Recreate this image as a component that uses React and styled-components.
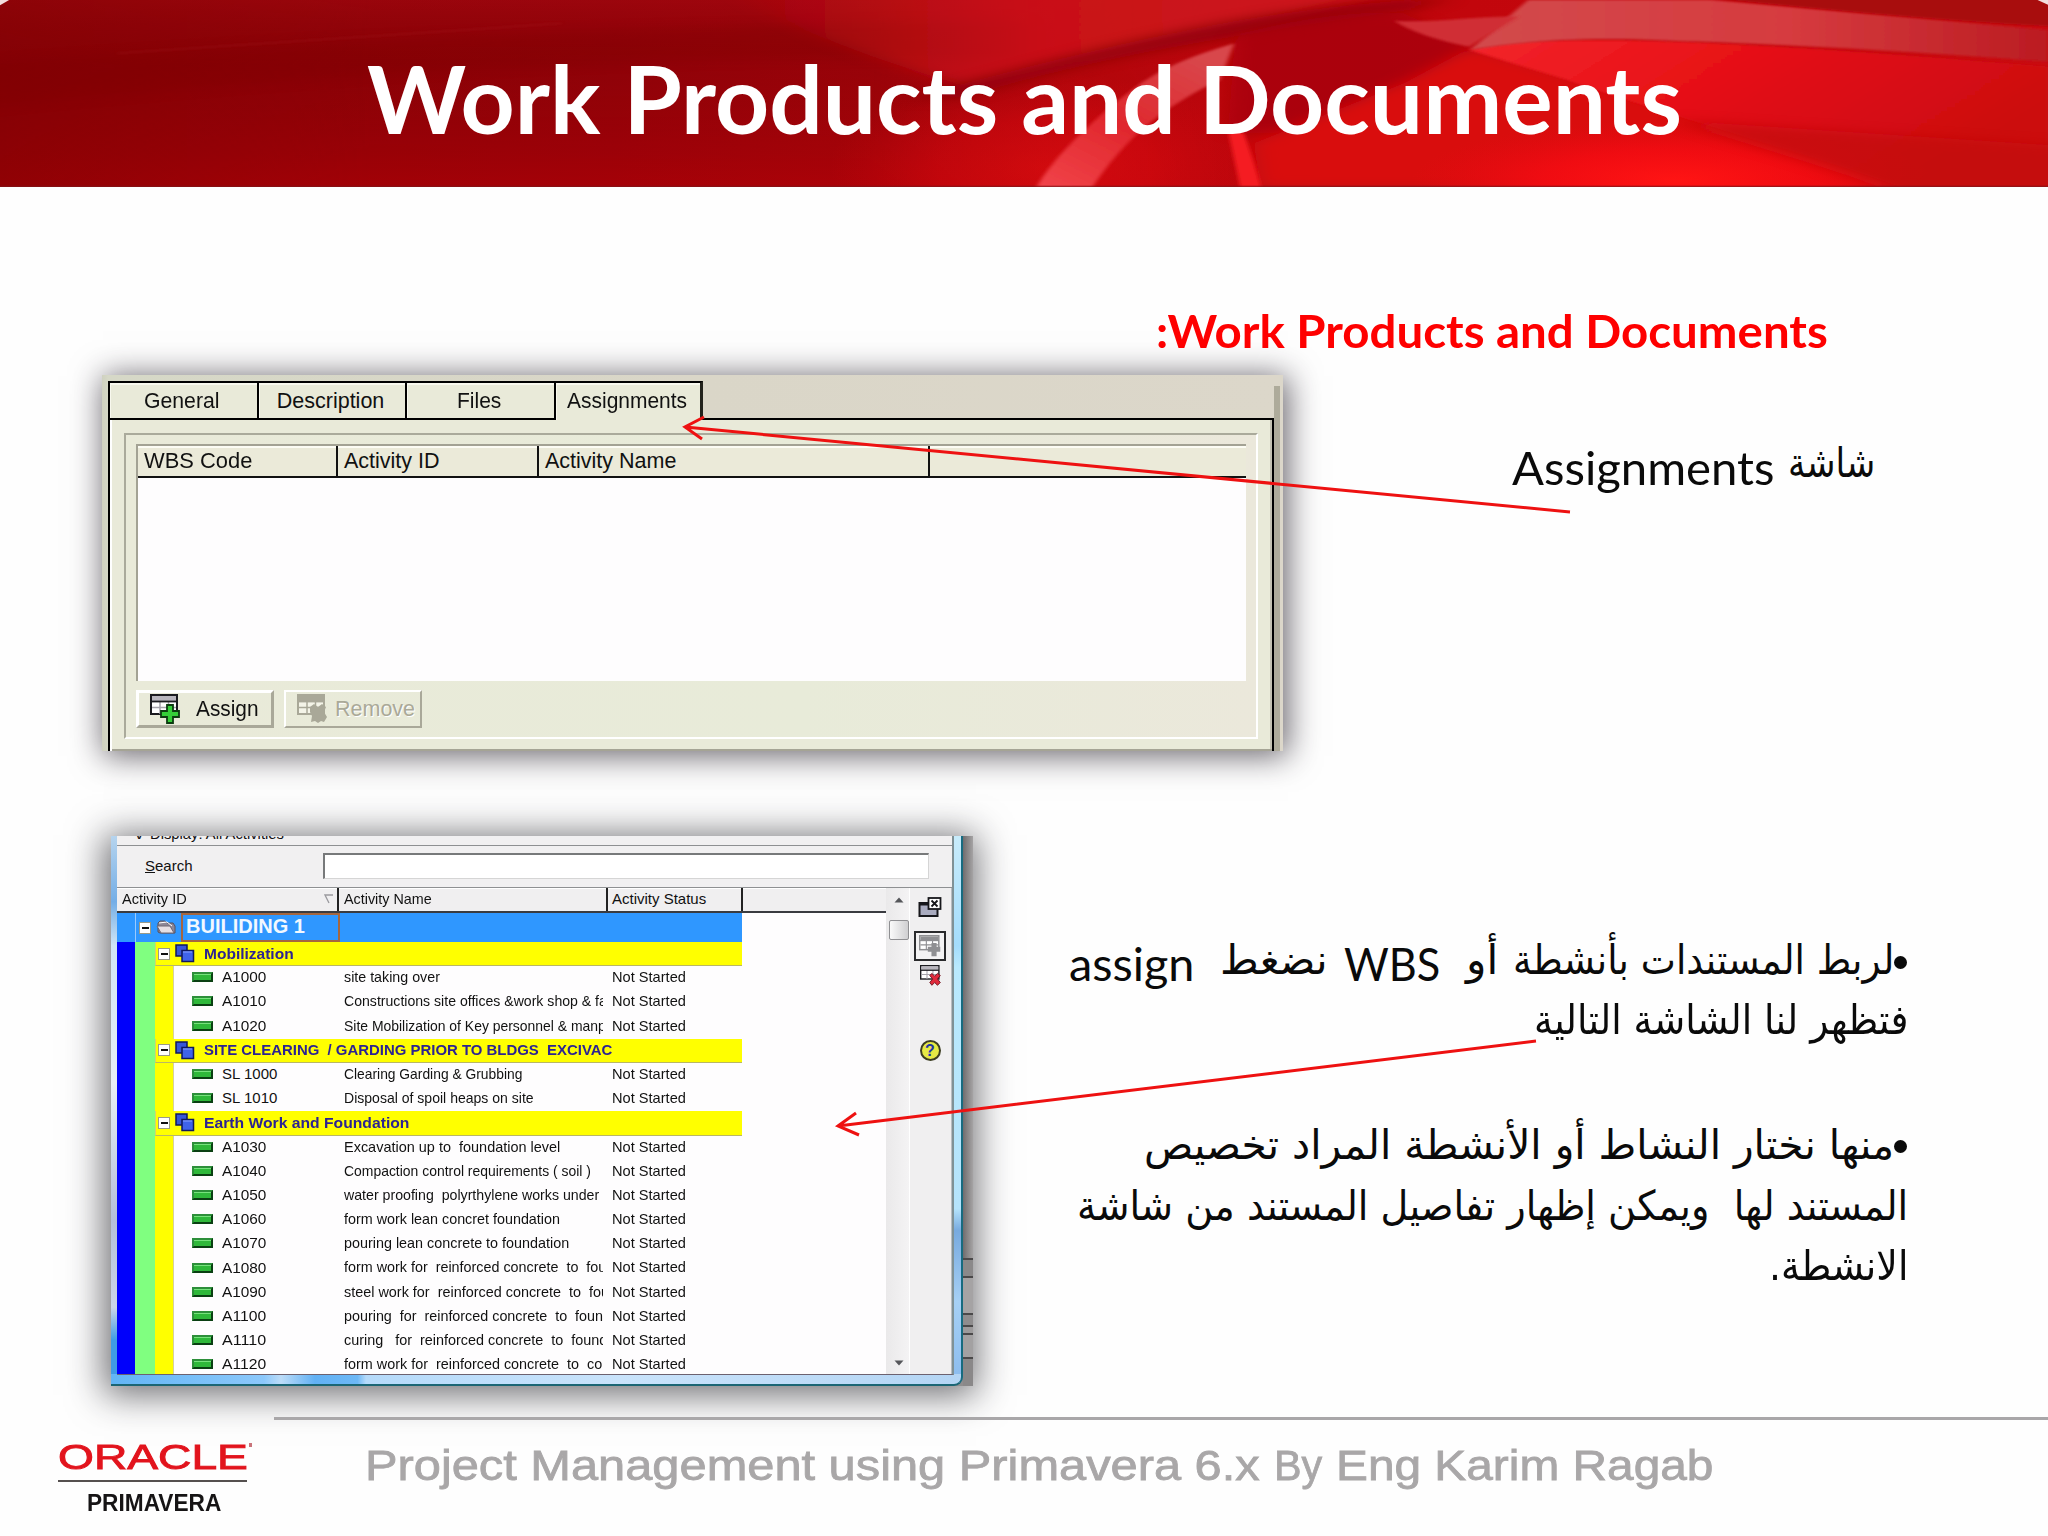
import React, { useLayoutEffect, useRef, useState } from "react";
import styled, { createGlobalStyle } from "styled-components";

const GlobalStyle = createGlobalStyle`
  *, *::before, *::after { box-sizing: border-box; }
  body { margin: 0; background: #fefefe; }
`;

const UI = `"Liberation Sans", Arial, sans-serif`;
const TITLE = `Lato, "Open Sans", sans-serif`;
const ARABIC = `"DejaVu Sans", "Noto Sans", sans-serif`;

/* ---------- text stretched to a set measure ---------- */

const FitBox = styled.span`
  display: block;
  flex: none;
  direction: ltr;
  text-align: left;
  white-space: pre;
  width: ${(p) => p.$w}px;
`;
const FitInner = styled.span`
  display: inline-block;
  transform-origin: 0 50%;
`;

function Fit({ w, drop = 0, rtl, className, children }) {
  const ref = useRef(null);
  const [scale, setScale] = useState(1);
  useLayoutEffect(() => {
    if (ref.current.offsetWidth) setScale(w / ref.current.offsetWidth);
  }, [w]);
  return (
    <FitBox $w={w} className={className}>
      <FitInner
        ref={ref}
        dir={rtl ? "rtl" : "ltr"}
        style={{ transform: `translateY(${drop}px) scaleX(${scale})` }}
      >
        {children}
      </FitInner>
    </FitBox>
  );
}

/* ---------- slide frame ---------- */

const Slide = styled.div`
  position: relative;
  display: flex;
  flex-direction: column;
  width: 2048px;
  height: 1536px;
  overflow: hidden;
  background: #fefefe;
`;
const Banner = styled.header`
  position: relative;
  flex: none;
  display: flex;
  justify-content: center;
  height: 187px;
  padding-top: 43px;
  background: #9a0308;
`;
const BannerArt = styled.svg`
  position: absolute;
  inset: 0;
  width: 100%;
  height: 100%;
`;
const Title = styled.h1`
  position: relative;
  margin: 0;
  font: 700 93px/110px ${TITLE};
  color: #fff;
`;
const HeadingRow = styled.div`
  flex: none;
  display: flex;
  justify-content: flex-end;
  height: 188px;
  padding: 116px 220px 0 0;
`;
const Heading = styled.h2`
  margin: 0;
  font: 700 46.5px/54px ${TITLE};
  color: #fe0000;
`;
const Section = styled.section`
  flex: none;
  display: flex;
  justify-content: space-between;
  height: ${(p) => p.$h}px;
  margin-bottom: ${(p) => p.$gap || 0}px;
  padding-left: ${(p) => p.$left}px;
`;
const Notes = styled.div`
  padding: ${(p) => p.$top}px ${(p) => p.$right}px 0 0;
`;
const Line = styled.div`
  display: flex;
  direction: rtl;
  height: 61.4px;
`;
const Latin = styled(Fit)`
  font: 400 46px/61.4px ${TITLE};
  color: #0a0a0a;
  margin-right: ${(p) => p.$gap || 0}px;
`;
const Arabic = styled(Fit)`
  font: 400 41px/61.4px ${ARABIC};
  color: #0a0a0a;
  margin-right: ${(p) => p.$gap || 0}px;
`;
const Bullet = styled.span`
  flex: none;
  width: 13px;
  height: 13px;
  margin: 27px 1px 0 0;
  border-radius: 50%;
  overflow: hidden;
  background: #0a0a0a;
  color: transparent;
`;
const Arrows = styled.svg`
  position: absolute;
  inset: 0;
  pointer-events: none;
`;

/* ---------- assignments panel ---------- */

const Panel = styled.div`
  display: flex;
  width: 1181px;
  height: 376px;
  padding: 6px 0 0 6px;
  background: linear-gradient(90deg, #cfd1c0 0, #d6d8c7 6px, #dad6c8 600px, #dcd7ca);
  box-shadow: 3px 3px 30px 2px rgba(30, 25, 35, 0.66);
`;
const PanelMain = styled.div`
  display: flex;
  flex-direction: column;
  width: 1166px;
  font: 400 21.5px/24px ${UI};
  color: #111;
`;
const PanelEdge = styled.div`
  width: 6px;
  margin-top: 5px;
  background: #aeab9b;
`;
const Tabs = styled.div`
  display: flex;
  height: 39px;
`;
const Tab = styled.div`
  display: flex;
  justify-content: center;
  width: ${(p) => (p.$active ? 149 : 148.5)}px;
  padding: 6px 2px 0 0;
  background: #e9ead9;
  border: 2px solid #000;
  border-right: ${(p) => (p.$active ? "3px solid #22221c" : "0")};
  border-bottom: ${(p) => (p.$active ? "0" : "2px solid #000")};
  box-shadow: inset 1px 2px 0 #f8f8ee;
`;
const TabRest = styled.div`
  flex: 1;
  border-bottom: 2px solid #000;
`;
const Page = styled.div`
  flex: 1;
  padding: 13px 14px 12px;
  background: #e9ead9;
  border: solid #000;
  border-width: 0 2px;
  box-shadow: inset 2px 0 0 #fff, inset 0 -2px 0 #a5a495, inset -2px 0 0 #c3c1b2;
`;
const Group = styled.div`
  height: 100%;
  padding: 9px 8px 0 10px;
  border: 2px solid;
  border-color: #aaaa9b #fff #fff #aaaa9b;
  background: linear-gradient(90deg, #e9ead9, #e8ebd9 60%, #ebe8db);
`;
const List = styled.div`
  width: 1110px;
  height: 237px;
  background: #fefdfe;
  border: solid #a3a294;
  border-width: 2px 0 0 2px;
`;
const ListHead = styled.div`
  display: flex;
  height: 32px;
  background: #ebead9;
  border-bottom: 2px solid #111;
  box-shadow: inset 0 2px 0 #fcfcf4;
`;
const ListCol = styled.div`
  width: ${(p) => p.$w}px;
  padding: 3px 0 0 6px;
  border-right: ${(p) => (p.$last ? "0" : "2px solid #111")};
`;
const Buttons = styled.div`
  display: flex;
  gap: 10px;
  margin-top: 9px;
`;
const Button = styled.div`
  display: flex;
  align-items: center;
  width: 138px;
  height: 38px;
  padding: 0 0 0 11px;
  gap: ${(p) => (p.$off ? 8 : 16)}px;
  color: ${(p) => (p.$off ? "#aaa998" : "#111")};
  text-shadow: ${(p) => (p.$off ? "1px 1px 0 #fff" : "none")};
  border: ${(p) => (p.$off ? 2 : 3)}px solid;
  border-color: #fff #a9a899 #a9a899 #fff;
`;

/* ---------- activity picker window ---------- */

const Window = styled.div`
  display: flex;
  width: 862px;
  height: 550px;
  background: #8f8d8e;
  box-shadow: -2px 4px 34px 5px rgba(25, 25, 30, 0.62);
`;
const Frame = styled.div`
  display: flex;
  width: 852px;
  height: 550px;
  padding: 0 7px 12px 6px;
  border-bottom: 2px solid #1b6675;
  border-right: 2px solid #176b80;
  border-radius: 0 0 9px 0;
  background:
    linear-gradient(90deg, #62b5f5, #8cc8fb 18%, #bcdcf8 20%, #62b1f4 24%, #6db8f6 29%, #b5dafa 30%, #c9e3fb 60%, #b4d5f4) 0 100% / 100% 10px no-repeat,
    linear-gradient(180deg, #c8ecfb, #a4dcfb 20%, #b9e9fd 24%, #b5e3fb 68%, #78aadf 72%, #a6d0f5 85%, #8abbee) 100% 0 / 8px 100% no-repeat,
    linear-gradient(180deg, #b6d4ee, #74aee6 12%, #cfe5f5 20%, #e8eef5 45%, #b4bfd8 70%, #cbd7e8 86%, #3f9be5 92%) 0 0 / 6px 100% no-repeat,
    #c6e2f6;
`;
const Beyond = styled.div`
  width: 10px;
  display: flex;
  flex-direction: column;
  padding-top: 422px;
  background: linear-gradient(90deg, #6f6d6e, #a5a3a4);
`;
const Notch = styled.div`
  flex: none;
  height: ${(p) => p.$h}px;
  border-top: 2px solid #4b494a;
  background: ${(p) => p.$c};
`;
const Client = styled.div`
  flex: none;
  display: flex;
  flex-direction: column;
  width: 837px;
  height: 539px;
  overflow: hidden;
  background: #f1f0f1;
  border-right: 2px solid #7f9196;
  border-bottom: 1px solid #6c6270;
  font: 400 15px/18px ${UI};
  color: #111;
`;
const DisplayBar = styled.div`
  flex: none;
  display: flex;
  gap: 6px;
  height: 10px;
  overflow: hidden;
  padding-left: 18px;
  border-bottom: 1px solid #8e9092;
`;
const SearchBar = styled.div`
  flex: none;
  display: flex;
  height: 42px;
  padding: 7px 23px 0 28px;
  border-bottom: 1px solid #8e9092;
`;
const SearchLabel = styled.div`
  width: 178px;
  padding-top: 4px;
`;
const SearchInput = styled.div`
  flex: 1;
  height: 26px;
  background: #fff;
  border: solid #77797a;
  border-width: 2px 1px 1px 2px;
  border-right-color: #d5d5d5;
  border-bottom-color: #d5d5d5;
`;
const Body = styled.div`
  flex: 1;
  display: flex;
  min-height: 0;
`;
const Table = styled.div`
  flex: none;
  width: 769px;
  overflow: hidden;
  background: #fefdfe;
`;
const Head = styled.div`
  display: flex;
  height: 25px;
  background: #f0eff0;
  border-bottom: 2px solid #3a3b40;
  box-shadow: inset 0 1px 0 #fff;
`;
const HeadCell = styled.div`
  display: flex;
  justify-content: space-between;
  width: ${(p) => p.$w}px;
  padding: 2px 3px 0 ${(p) => p.$pad}px;
  border-right: 2px solid #222;
`;
const Root = styled.div`
  display: flex;
  align-items: center;
  width: 624.5px;
  height: 29px;
  background: linear-gradient(90deg, #2f97ff 18px, #cfe3ff 18px, #2f97ff 19.5px);
`;
const RootName = styled.div`
  width: 159px;
  height: 29px;
  margin-left: 5px;
  padding-left: 3px;
  border: 2px solid #a5663f;
  font: 700 20px/22px ${UI};
  color: #f2f8ff;
`;
const Row = styled.div`
  display: flex;
  height: 24.2px;
`;
const Stripe = styled.div`
  flex: none;
  width: ${(p) => p.$w}px;
  background: ${(p) => p.$c};
`;
const GroupCell = styled.div`
  display: flex;
  align-items: center;
  width: 586.5px;
  padding-left: 2px;
  background: #ffff00;
  border-left: 1px solid #d8d36a;
  border-bottom: 1px solid #b9b765;
  font-weight: 700;
  color: #2c2392;
`;
const GroupName = styled.div`
  margin-left: 9px;
`;
const IdCell = styled.div`
  display: flex;
  align-items: center;
  flex: none;
  width: 171px;
  padding: 0 0 2px 18px;
  gap: 9px;
  border-left: 1px solid #d5cfa0;
`;
const NameCell = styled.div`
  flex: none;
  width: 259px;
  margin-right: 9px;
  padding-top: 2px;
  overflow: hidden;
`;
const StatusCell = styled.div`
  padding-top: 2px;
`;
const Toggle = styled.div`
  display: flex;
  align-items: center;
  justify-content: center;
  flex: none;
  width: 12px;
  height: 12px;
  background: #fff;
  border: 1px solid #9a9a88;
  &::after {
    content: "";
    width: 7px;
    height: 2px;
    background: #111;
  }
`;
const Bar = styled.div`
  width: 21px;
  height: 10px;
  background: #2fb83a;
  border: 2px solid;
  border-color: #2d8f3a #0a3f12 #0a3f12 #2d8f3a;
  box-shadow: inset 0 1px 0 #76e27c;
`;
const Scroll = styled.div`
  flex: none;
  display: flex;
  flex-direction: column;
  align-items: center;
  width: 23px;
  padding: 9px 0 8px 2px;
  background: linear-gradient(90deg, #eae9ea, #f4f3f4);
`;
const Thumb = styled.div`
  width: 20px;
  height: 20px;
  margin-top: 17px;
  background: linear-gradient(90deg, #fafafa, #cfcfd1);
  border: 1px solid #8f8f92;
  border-radius: 2px;
`;
const Spacer = styled.div`
  flex: 1;
`;
const Tools = styled.div`
  flex: none;
  display: flex;
  flex-direction: column;
  align-items: center;
  width: 43px;
  padding: 9px 1px 0 0;
  border-left: 1px solid #fff;
  border-right: 1px solid #b9bcc0;
  background: #f0eff0;
`;
const Pressed = styled.div`
  display: flex;
  align-items: center;
  justify-content: center;
  width: 32px;
  height: 30px;
  margin: 14px 0 4px;
  border: 2px solid #2a2a2c;
  background: #f3f2f3;
`;
const Help = styled.div`
  display: flex;
  align-items: center;
  justify-content: center;
  width: 21px;
  height: 21px;
  margin-top: 54px;
  border: 2px solid #3c3d22;
  border-radius: 50%;
  background: #e6e945;
  font: 700 16px/17px ${UI};
  color: #2034a8;
`;

/* ---------- footer ---------- */

const Footer = styled.footer`
  flex: 1;
  display: flex;
  padding-top: 31px;
`;
const Brand = styled.div`
  width: 274px;
  padding: 19px 0 0 58px;
`;
const Oracle = styled.div`
  display: flex;
  height: 46px;
  border-bottom: 2px solid #55504f;
  width: 189px;
  font: 400 35px/42px ${UI};
  color: #e2141d;
  -webkit-text-stroke: 0.9px #e2141d;
`;
const Mark = styled.span`
  width: 3px;
  height: 4px;
  margin: 7px 0 0 1px;
  flex: none;
  background: #c9747a;
`;
const Primavera = styled.div`
  padding: 9px 0 0 29px;
  font: 700 23px/25px ${UI};
  color: #161415;
`;
const Credit = styled.div`
  flex: 1;
  display: flex;
  height: 100%;
  padding: 20px 0 0 91px;
  gap: 14px;
  border-top: 3px solid #a9a7a9;
  font: 400 43px/50px ${UI};
  color: #a9a7a8;
  -webkit-text-stroke: 0.8px #a9a7a8;
`;

/* ---------- drawings ---------- */

const GridIcon = ({ tone = "#1b1b1f", fill = "#fff", head = "#b9b6be", line, mark, size = 30 }) => (
  <svg width={size} height={size} viewBox="0 0 30 30">
    <rect x="1" y="1" width="26" height="19" fill={fill} stroke={tone} strokeWidth="2" />
    <rect x="2" y="2" width="24" height="5" fill={head} />
    <path d="M10 7V20M18.500 7V20M2 13.500H26" stroke={line || "#a5a3ab"} strokeWidth="1.500" />
    <path d="M1 7.500H27" stroke={tone} strokeWidth="1.800" />
    {mark === "plus" && (
      <path d="M17 11h6v6h6v6h-6v6h-6v-6h-6v-6h6z" fill="#35cf38" stroke="#0c3c10" strokeWidth="1.800" />
    )}
    {mark === "plusOff" && <path d="M17 11h7v5h5v7h-5v6h-7v-6h-5v-7h5z" fill={tone} />}
    {mark === "crossOff" && (
      <path d="M13 13l4-3 4 3 4-3 4 3-2 5 3 5-3 5-3-1-3 2-3-2-4 1 1-6-2-4z" fill={tone} />
    )}
    {mark === "cross" && (
      <path
        d="M14 15l3-3 4 4 4-4 4 3-4 5 4 5-4 4-4-4-4 4-3-4 4-5z"
        fill="#e02a3c"
        stroke="#6b0f1b"
        strokeWidth="1.300"
      />
    )}
  </svg>
);

const FolderIcon = () => (
  <svg width="20" height="15" viewBox="0 0 20 15" style={{ marginLeft: 5 }}>
    <path d="M2 12V3l2-2h5l2 2h6l2 3v7H4z" fill="#8d8796" stroke="#55505f" />
    <path d="M1 6h13l4 7H5z" fill="#e6dfe3" stroke="#6f6672" />
    <path d="M3 3l8-1 5 4" fill="none" stroke="#fff" />
  </svg>
);

const WbsIcon = () => (
  <svg width="20" height="19" viewBox="0 0 20 19" style={{ marginLeft: 5 }}>
    <rect x="1" y="1" width="11" height="11" fill="#3757d8" stroke="#10195c" strokeWidth="1.500" />
    <rect x="7" y="6.500" width="11.500" height="11" fill="#3f63ea" stroke="#10195c" strokeWidth="1.500" />
    <path d="M8 8h9" stroke="#8aa2ff" />
  </svg>
);

const CloseIcon = () => (
  <svg width="24" height="20" viewBox="0 0 24 20">
    <rect x="1.500" y="6" width="18" height="13" fill="#a9abbf" stroke="#17171b" strokeWidth="2" />
    <path d="M1 7h10" stroke="#17171b" strokeWidth="3" />
    <rect x="10.500" y="1" width="12" height="11" fill="#fff" stroke="#17171b" strokeWidth="1.800" />
    <path d="M13.500 3.500l6 6M19.500 3.500l-6 6" stroke="#17171b" strokeWidth="1.800" />
  </svg>
);

const Chevron = ({ up }) => (
  <svg width="10" height="6" viewBox="0 0 10 6">
    <path d={up ? "M0.500 5.500L5 0.500l4.500 5z" : "M0.500 0.500L5 5.500l4.500-5z"} fill="#55565a" />
  </svg>
);

const BannerDrawing = () => (
  <BannerArt viewBox="0 0 3136 561" preserveAspectRatio="none">
    <defs>
      <linearGradient id="base" x1="0" y1="0" x2="1" y2="0">
        <stop offset="0" stopColor="#860205" />
        <stop offset="0.140" stopColor="#8e0207" />
        <stop offset="0.300" stopColor="#96030a" />
        <stop offset="0.430" stopColor="#a3050b" />
        <stop offset="0.520" stopColor="#b9070d" />
        <stop offset="0.720" stopColor="#c2060c" />
        <stop offset="1" stopColor="#c90b10" />
      </linearGradient>
      <linearGradient id="lift" x1="0" y1="0" x2="0" y2="1">
        <stop offset="0" stopColor="#a00810" stopOpacity="0.550" />
        <stop offset="0.350" stopColor="#7c0004" stopOpacity="0.250" />
        <stop offset="1" stopColor="#b80006" stopOpacity="0.450" />
      </linearGradient>
      <linearGradient id="fadeMask" x1="0" y1="0" x2="1" y2="0">
        <stop offset="0" stopColor="#fff" stopOpacity="0.500" />
        <stop offset="0.300" stopColor="#fff" />
        <stop offset="0.700" stopColor="#fff" />
        <stop offset="1" stopColor="#fff" stopOpacity="0" />
      </linearGradient>
      <mask id="leftFade">
        <rect width="1900" height="561" fill="url(#fadeMask)" />
      </mask>
      <radialGradient id="glow">
        <stop offset="0" stopColor="#ff1414" />
        <stop offset="0.500" stopColor="#f20c12" stopOpacity="0.800" />
        <stop offset="1" stopColor="#e00a10" stopOpacity="0" />
      </radialGradient>
      <linearGradient id="topLight" x1="0" y1="0" x2="1" y2="0">
        <stop offset="0" stopColor="#cf141b" stopOpacity="0" />
        <stop offset="0.450" stopColor="#cf141b" stopOpacity="0.800" />
        <stop offset="1" stopColor="#d01a20" stopOpacity="0.750" />
      </linearGradient>
      <linearGradient id="veil" x1="0" y1="0" x2="1" y2="0">
        <stop offset="0" stopColor="#d24a4c" />
        <stop offset="0.550" stopColor="#d63b3f" />
        <stop offset="1" stopColor="#bb1c22" />
      </linearGradient>
      <linearGradient id="sheet" x1="0" y1="0" x2="1" y2="0.400">
        <stop offset="0" stopColor="#f3252b" />
        <stop offset="0.400" stopColor="#e81218" />
        <stop offset="1" stopColor="#cc0a10" />
      </linearGradient>
      <linearGradient id="beam" x1="0" y1="1" x2="0.700" y2="0">
        <stop offset="0" stopColor="#f2454b" />
        <stop offset="0.500" stopColor="#e0272d" />
        <stop offset="1" stopColor="#d8474b" />
      </linearGradient>
      <filter id="soft" x="-20%" y="-40%" width="140%" height="180%">
        <feGaussianBlur stdDeviation="16" />
      </filter>
      <filter id="fine">
        <feGaussianBlur stdDeviation="3" />
      </filter>
    </defs>
    <rect width="3136" height="561" fill="url(#base)" />
    <rect width="1900" height="561" fill="url(#lift)" mask="url(#leftFade)" />
    <path d="M-60 195C400 130 700 90 1568 60V180C1100 160 600 200 -60 330z" fill="#7d0004" opacity="0.300" filter="url(#soft)" />
    <path d="M180 160L860 70" stroke="#b52a2e" strokeWidth="3" opacity="0.350" filter="url(#fine)" />
    <ellipse cx="1600" cy="500" rx="330" ry="280" fill="url(#glow)" opacity="0.380" />
    <path d="M1100 -40H2160L1900 80C1780 120 1640 190 1480 260C1380 200 1240 120 1100 -40z" fill="url(#topLight)" filter="url(#soft)" />
    <path d="M2230 -10C1950 20 1780 90 1380 300L1480 290C1650 190 1800 130 2160 30z" fill="#8c0408" opacity="0.850" filter="url(#soft)" />
    <path d="M1900 100C2000 50 2090 30 2150 40L2280 160L2160 250L1990 400L1880 400L1890 130z" fill="#a50409" opacity="0.750" filter="url(#soft)" />
    <path d="M2250 145L2400 230C2550 310 2800 430 2900 561H1930L1920 430L2150 250z" fill="#d90a11" filter="url(#soft)" />
    <ellipse cx="2580" cy="540" rx="420" ry="190" fill="url(#glow)" />
    <path d="M2250 150C2380 90 2700 130 3136 200V561H2910C2800 480 2560 350 2400 240z" fill="url(#sheet)" filter="url(#fine)" />
    <ellipse cx="2560" cy="540" rx="400" ry="170" fill="url(#glow)" opacity="0.700" />
    <path d="M2560 360L3180 440V600H2930C2800 500 2700 450 2560 360z" fill="#c3070d" opacity="0.700" filter="url(#soft)" />
    <path d="M2340 0H2620L3136 90V185C2900 150 2700 130 2560 122C2440 110 2340 120 2250 150z" fill="url(#veil)" filter="url(#fine)" />
    <path d="M2600 -10H3150V80C2950 60 2780 25 2600 -10z" fill="#a80a10" filter="url(#fine)" />
    <path d="M2135 62C2200 70 2260 48 2325 50L2250 140C2200 120 2160 95 2135 62z" fill="#d02f35" filter="url(#fine)" />
    <path d="M1890 130L1868 240C1780 320 1720 420 1670 570H1585C1610 470 1690 330 1740 260C1790 190 1840 160 1890 130z" fill="url(#beam)" filter="url(#fine)" />
    <path d="M1880 390L1905 400C1915 460 1925 510 1932 570H1900z" fill="#f51d22" filter="url(#fine)" />
    <rect y="557" width="3136" height="4" fill="#80151a" opacity="0.700" />
    <path d="M0 0H14L0 16z" fill="#f3dede" />
    <path d="M3136 0H3120L3136 14z" fill="#f3dede" />
  </BannerArt>
);

/* ---------- data ---------- */

const ROWS = [
  { group: "Mobilization", w: 90 },
  { id: "A1000", name: "site taking over", w: 96 },
  { id: "A1010", name: "Constructions site offices &work shop & fa", w: 263 },
  { id: "A1020", name: "Site Mobilization of Key personnel & manp", w: 262 },
  { group: "SITE CLEARING  / GARDING PRIOR TO BLDGS  EXCIVAC", w: 408 },
  { id: "SL 1000", name: "Clearing Garding & Grubbing", w: 178 },
  { id: "SL 1010", name: "Disposal of spoil heaps on site", w: 190 },
  { group: "Earth Work and Foundation", w: 205 },
  { id: "A1030", name: "Excavation up to  foundation level", w: 216 },
  { id: "A1040", name: "Compaction control requirements ( soil )", w: 247 },
  { id: "A1050", name: "water proofing  polyrthylene works under", w: 255 },
  { id: "A1060", name: "form work lean concret foundation", w: 216 },
  { id: "A1070", name: "pouring lean concrete to foundation", w: 225 },
  { id: "A1080", name: "form work for  reinforced concrete  to  fou", w: 262 },
  { id: "A1090", name: "steel work for  reinforced concrete  to  fou", w: 265 },
  { id: "A1100", name: "pouring  for  reinforced concrete  to  foun", w: 259 },
  { id: "A1110", name: "curing   for  reinforced concrete  to  found", w: 263 },
  { id: "A1120", name: "form work for  reinforced concrete  to  co", w: 258 },
];

function TableRow({ row }) {
  return (
    <Row>
      <Stripe $w={18} $c="#0000fb" />
      <Stripe $w={20} $c="#80ff80" />
      {row.group ? (
        <GroupCell>
          <Toggle />
          <WbsIcon />
          <GroupName>
            <Fit w={row.w}>{row.group}</Fit>
          </GroupName>
        </GroupCell>
      ) : (
        <>
          <Stripe $w={18} $c="#ffff00" />
          <IdCell>
            <Bar />
            <Fit w={row.id.length > 5 ? 55 : 44}>{row.id}</Fit>
          </IdCell>
          <NameCell>
            <Fit w={row.w}>{row.name}</Fit>
          </NameCell>
          <StatusCell>
            <Fit w={74}>Not Started</Fit>
          </StatusCell>
        </>
      )}
    </Row>
  );
}

function AssignmentsPanel() {
  return (
    <Panel>
      <PanelMain>
        <Tabs>
          <Tab><Fit w={76}>General</Fit></Tab>
          <Tab><Fit w={108}>Description</Fit></Tab>
          <Tab><Fit w={44}>Files</Fit></Tab>
          <Tab $active><Fit w={120}>Assignments</Fit></Tab>
          <TabRest />
        </Tabs>
        <Page>
          <Group>
            <List>
              <ListHead>
                <ListCol $w={200}><Fit w={108}>WBS Code</Fit></ListCol>
                <ListCol $w={201}><Fit w={96}>Activity ID</Fit></ListCol>
                <ListCol $w={391}><Fit w={131}>Activity Name</Fit></ListCol>
                <ListCol $w={316} $last />
              </ListHead>
            </List>
            <Buttons>
              <Button>
                <GridIcon mark="plus" />
                <Fit w={63}>Assign</Fit>
              </Button>
              <Button $off>
                <GridIcon mark="crossOff" tone="#a9a898" line="#a9a898" fill="#f4f4e8" head="#a9a898" />
                <Fit w={80}>Remove</Fit>
              </Button>
            </Buttons>
          </Group>
        </Page>
      </PanelMain>
      <PanelEdge />
    </Panel>
  );
}

function ActivityWindow() {
  return (
    <Window>
      <Frame>
        <Client>
          <DisplayBar>
            <Fit w={9} drop={-11}>v</Fit>
            <Fit w={134} drop={-11}>Display: All Activities</Fit>
          </DisplayBar>
          <SearchBar>
            <SearchLabel>
              <Fit w={48}><u>S</u>earch</Fit>
            </SearchLabel>
            <SearchInput />
          </SearchBar>
          <Body>
            <Table>
              <Head>
                <HeadCell $w={222} $pad={5}>
                  <Fit w={65}>Activity ID</Fit>
                  <svg width="10" height="16" viewBox="0 0 10 16">
                    <path d="M9 5H1L5 13" fill="none" stroke="#9a9a9e" strokeWidth="1.300" />
                  </svg>
                </HeadCell>
                <HeadCell $w={269} $pad={5}><Fit w={88}>Activity Name</Fit></HeadCell>
                <HeadCell $w={134.500} $pad={4}><Fit w={94}>Activity Status</Fit></HeadCell>
              </Head>
              <Root>
                <Stripe $w={22} $c="transparent" />
                <Toggle />
                <FolderIcon />
                <RootName><Fit w={119}>BUILIDING 1</Fit></RootName>
              </Root>
              {ROWS.map((row) => (
                <TableRow key={row.id || row.group} row={row} />
              ))}
            </Table>
            <Scroll>
              <Chevron up />
              <Thumb />
              <Spacer />
              <Chevron />
            </Scroll>
            <Tools>
              <CloseIcon />
              <Pressed>
                <GridIcon mark="plusOff" tone="#8f8f92" line="#8f8f92" fill="#fff" head="#8f8f92" size={22} />
              </Pressed>
              <GridIcon mark="cross" size={21} />
              <Help>?</Help>
            </Tools>
          </Body>
        </Client>
      </Frame>
      <Beyond>
        <Notch $h={18} $c="#8b898a" />
        <Notch $h={37} $c="#a5a3a4" />
        <Notch $h={12} $c="#8f8d8e" />
        <Notch $h={8} $c="#9d9b9c" />
        <Notch $h={24} $c="#a3a1a2" />
        <Notch $h={29} $c="#8a8889" />
      </Beyond>
    </Window>
  );
}

export default function App() {
  return (
    <Slide>
      <GlobalStyle />
      <Banner>
        <BannerDrawing />
        <Title>
          <Fit w={1315}>Work Products and Documents</Fit>
        </Title>
      </Banner>

      <HeadingRow>
        <Heading>
          <Fit w={672}>:Work Products and Documents</Fit>
        </Heading>
      </HeadingRow>

      <Section $h={376} $gap={85} $left={102}>
        <AssignmentsPanel />
        <Notes $top={62} $right={173}>
          <Line>
            <Arabic w={87} rtl drop={-4}>شاشة</Arabic>
            <Latin w={262} $gap={14}>Assignments</Latin>
          </Line>
        </Notes>
      </Section>

      <Section $h={550} $left={111}>
        <ActivityWindow />
        <Notes $top={93} $right={140}>
          <Line>
            <Bullet />
            <Arabic w={381} rtl drop={1}>لربط المستندات بأنشطة</Arabic>
            <Arabic w={32} rtl drop={1} $gap={15}>أو</Arabic>
            <Latin w={96} drop={4} $gap={26}>WBS</Latin>
            <Arabic w={108} rtl drop={1} $gap={16}>نضغط</Arabic>
            <Latin w={125} drop={4} $gap={26}>assign</Latin>
          </Line>
          <Line>
            <Arabic w={374} rtl>فتظهر لنا الشاشة التالية</Arabic>
          </Line>
          <Line />
          <Line>
            <Bullet />
            <Arabic w={750} rtl drop={2}>منها نختار النشاط أو الأنشطة المراد تخصيص</Arabic>
          </Line>
          <Line>
            <Arabic w={831} rtl drop={1}>المستند لها  ويمكن إظهار تفاصيل المستند من شاشة</Arabic>
          </Line>
          <Line>
            <Arabic w={139} rtl>الانشطة.</Arabic>
          </Line>
        </Notes>
      </Section>

      <Footer>
        <Brand>
          <Oracle>
            <Fit w={190}>ORACLE</Fit>
            <Mark />
          </Oracle>
          <Primavera>
            <Fit w={134}>PRIMAVERA</Fit>
          </Primavera>
        </Brand>
        <Credit>
          <Fit w={895}>Project Management using Primavera 6.x</Fit>
          <Fit w={48}>By</Fit>
          <Fit w={377}>Eng Karim Ragab</Fit>
        </Credit>
      </Footer>

      <Arrows width="2048" height="1536" viewBox="0 0 2048 1536">
        <g fill="none" stroke="#ee1111" strokeWidth="3">
          <path d="M1570 512L685 427M704 417L685 427L702 439" />
          <path d="M1536 1041L838 1126M856 1113L838 1126L859 1135" />
        </g>
      </Arrows>
    </Slide>
  );
}
